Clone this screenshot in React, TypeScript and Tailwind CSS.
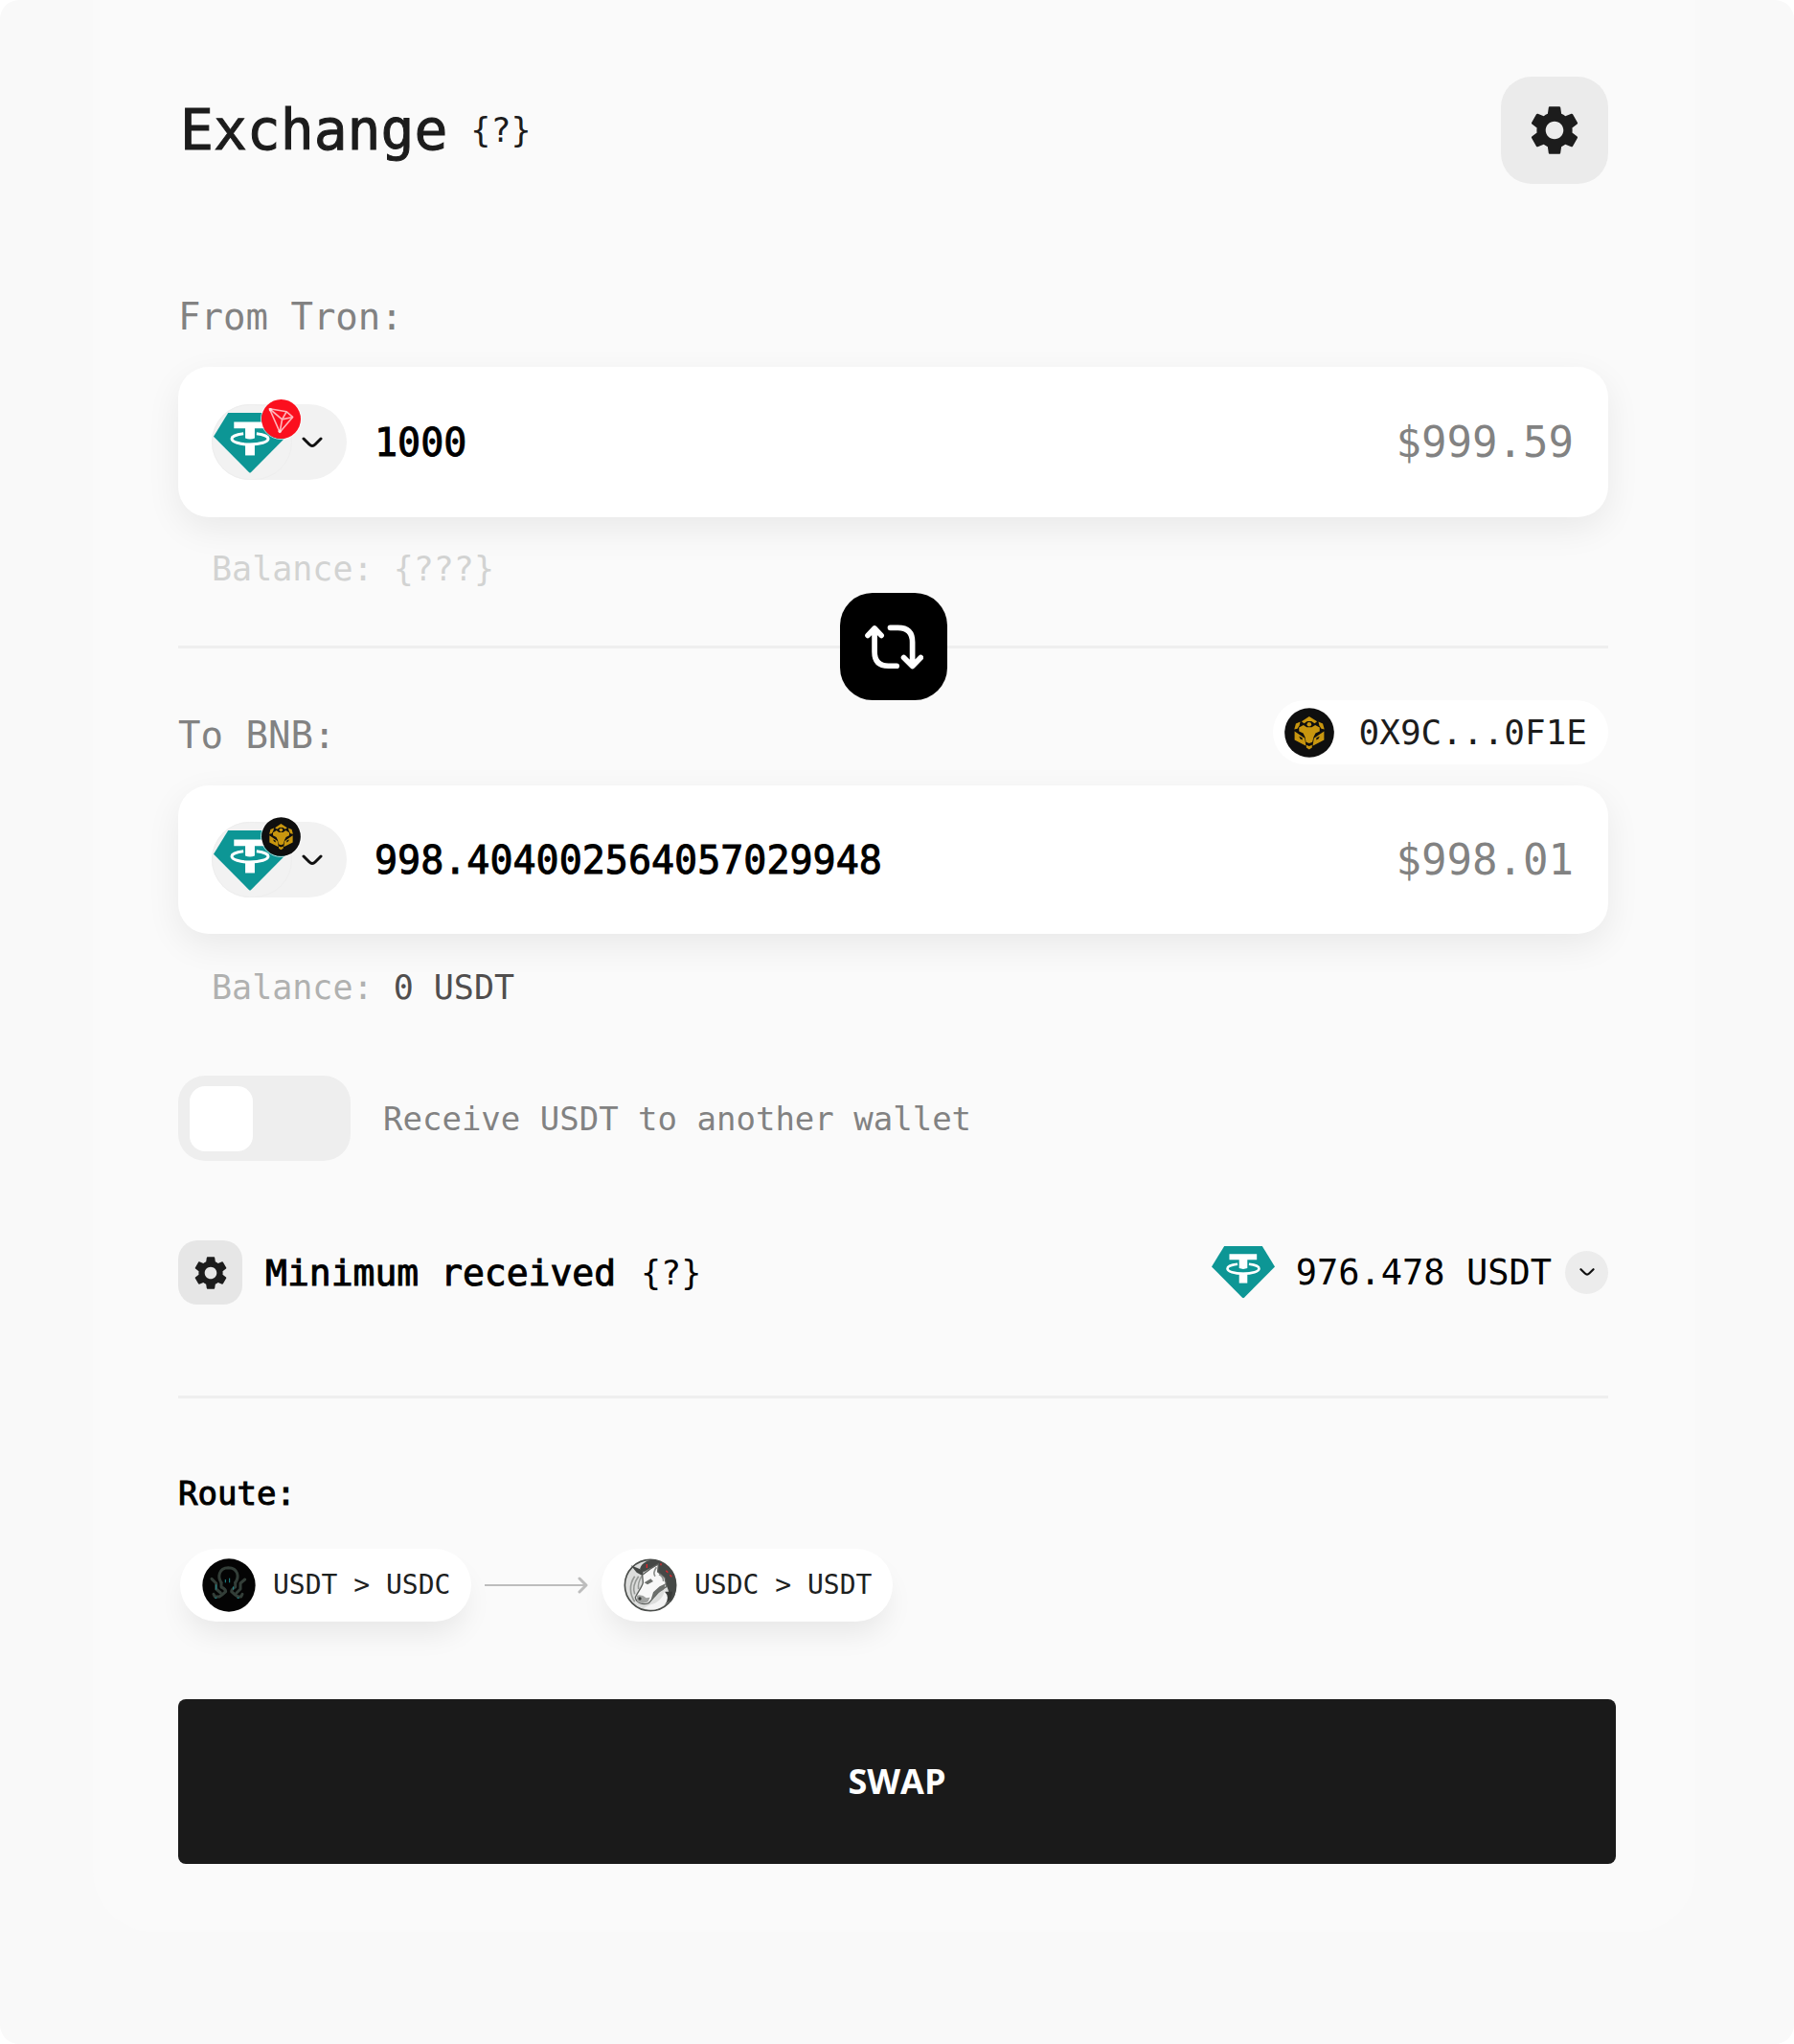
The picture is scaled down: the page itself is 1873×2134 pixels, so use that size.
import { useState } from "react";
import { MdSettings } from "react-icons/md";

function TetherLogo({ className }: { className: string }) {
  return (
    <svg viewBox="0 0 200 165" className={className} aria-hidden="true">
      <path d="M40 0H160L200 65L103 163Q100 166 97 163L0 65Z" fill="#0d9695" />
      <path d="M56 25H143V43H113V70Q100 75 87 70V43H56Z" fill="#fff" />
      <path d="M82 57C62 59 50 65 50 71C50 80 72 87 100 87S150 80 150 71C150 65 138 59 118 57" fill="none" stroke="#fff" strokeWidth="8" />
      <path d="M87 84H113V117H87Z" fill="#fff" />
    </svg>
  );
}

function TronLogo({ className }: { className: string }) {
  return (
    <svg viewBox="0 0 122 122" className={className} aria-hidden="true">
      <circle cx="61" cy="61" r="61" fill="#fb0f1e" />
      <g fill="none" stroke="#ffb3b8" strokeWidth="5" strokeLinejoin="round">
        <path d="M25 29L78 38L97 55L57 102Z" />
        <path d="M25 29L64 62L97 55M64 62L57 102M64 62L78 38" />
      </g>
      <circle cx="28" cy="32" r="5" fill="#ffd9db" />
      <circle cx="57" cy="99" r="5" fill="#ffd9db" />
    </svg>
  );
}

function TigerLogo({ className }: { className: string }) {
  return (
    <svg viewBox="0 0 157 157" className={className} aria-hidden="true">
      <circle cx="78.500" cy="78.500" r="78" fill="#0f0f0f" />
      <g fill="#c8960f">
        <path d="M54 43L78 27L103 43L95 49L85 42H72L62 49Z" />
        <circle cx="78" cy="52" r="7" />
        <path d="M31 68L36 50L50 44L47 56L41 66Z" />
        <path d="M126 68L121 50L107 44L110 56L116 66Z" />
        <path d="M46 62L60 54L70 61H86L97 54L111 62V74L98 80L92 92L88 108L78 112L68 108L65 92L59 80L46 74Z" />
        <path fillRule="evenodd" d="M32 74L64 96L68 120L32 101ZM46 90L50 98L57 101L56 94Z" />
        <path fillRule="evenodd" d="M125 74L93 96L89 120L125 101ZM111 90L107 98L100 101L101 94Z" />
        <path d="M69 117L78 121L87 117V125L78 131L69 125Z" />
      </g>
    </svg>
  );
}

function OctopusLogo({ className }: { className: string }) {
  return (
    <svg viewBox="0 0 168 168" className={className} aria-hidden="true">
      <circle cx="84" cy="84" r="83" fill="#040404" />
      <g fill="none" stroke="#333e38" strokeWidth="9" strokeLinecap="round" strokeLinejoin="round">
        <path d="M60 76C48 58 52 30 82 29C113 30 117 58 104 76" />
        <path d="M60 76V90Q74 96 74 104Q66 112 54 120H40L36 112" />
        <path d="M104 76V90Q92 96 92 104Q100 112 112 120H122L126 112" />
        <path d="M30 64L44 78V96L58 108" />
        <path d="M134 66L120 78V96L108 108" />
      </g>
      <path d="M73 66V76M86 62V76M44 82V98M98 88V98M40 124H46M110 124H116" stroke="#1d8e93" strokeWidth="3" />
    </svg>
  );
}

function HorseLogo({ className }: { className: string }) {
  return (
    <svg viewBox="0 0 166 168" className={className} aria-hidden="true">
      <circle cx="83" cy="84" r="80" fill="#dcdddc" stroke="#4a4d4a" strokeWidth="5" />
      <path d="M50 34C60 -2 112 -4 140 28C172 60 170 110 146 138C144 96 128 70 110 50L84 30L64 42Z" fill="#454846" />
      <path d="M22 22L62 38L58 54L40 44Z" fill="#454846" />
      <path d="M34 56C16 82 18 112 34 136M46 56C30 78 28 96 34 112M58 52C44 74 44 84 46 96" fill="none" stroke="#969996" strokeWidth="5" />
      <path d="M58 52L84 32L108 18L106 42L128 60L134 88L112 102L92 124L78 140C58 148 38 138 36 122C44 104 56 92 60 76Z" fill="#f8f8f8" stroke="#5d605d" strokeWidth="4" />
      <path d="M64 76L84 64L92 72L74 82ZM92 106L112 88L132 78L124 98L102 112L84 132Z" fill="#6c6f6c" />
      <path d="M40 116Q58 112 70 124L82 122L76 136Q56 146 42 136Z" fill="#a0a2a0" />
      <circle cx="50" cy="126" r="5" fill="#393b39" />
      <path d="M102 28Q90 46 98 56M110 50Q124 56 124 72" fill="none" stroke="#8d908d" strokeWidth="5" />
      <path d="M80 146C106 140 124 124 128 98C152 116 138 146 100 160Q78 162 62 156Z" fill="#f4f4f4" />
      <path d="M128 104Q146 122 128 146L148 128L152 104Z" fill="#393b39" />
      <path d="M72 18V30M116 16V22M132 38L138 44M144 52L150 58" stroke="#e5242c" strokeWidth="4" />
    </svg>
  );
}

function Chevron({ className }: { className: string }) {
  return (
    <svg viewBox="0 0 22 14" className={className} fill="none" stroke="#111" strokeWidth="3" strokeLinecap="round" strokeLinejoin="round" aria-hidden="true">
      <path d="M2 3L8 9Q11 12 14 9L20 3" />
    </svg>
  );
}

function CycleIcon() {
  return (
    <svg viewBox="0 0 185 145" className="w-[62px]" fill="none" stroke="#fff" strokeWidth="17" strokeLinecap="round" strokeLinejoin="round" aria-hidden="true">
      <path d="M12 37L33 15L54 37M33 18V88Q33 132 76 132H102" />
      <path d="M82 13H106Q151 13 151 58V130M124 106L151 133L177 106" />
    </svg>
  );
}

type AmountProps = {
  id: string;
  network: "tron" | "bnb";
  amount: string;
  value: string;
  height: string;
};

function AmountCard({ id, network, amount, value, height }: AmountProps) {
  const [text, setText] = useState(amount);
  return (
    <div className={`flex items-center rounded-[32px] bg-white pl-[35px] pr-9 shadow-[0_12px_36px_rgba(0,0,0,0.07)] ${height}`}>
      <button type="button" aria-label="Choose token" className="relative flex h-[79px] w-[141px] shrink-0 items-center rounded-full bg-[#f2f2f2]">
        <span className="flex h-[79px] w-[84px] items-center rounded-full border border-[#eeeeee] pl-px pt-0.5">
          <TetherLogo className="w-[76px]" />
        </span>
        <Chevron className="ml-2.5 w-[22px]" />
        <span className="absolute -top-1.5 left-[51px] rounded-full border border-white/70">
          {network === "tron" ? <TronLogo className="size-[41px]" /> : <TigerLogo className="size-[41px]" />}
        </span>
      </button>
      <input
        id={id}
        value={text}
        inputMode="decimal"
        onChange={(e) => setText(e.target.value)}
        className="ml-[29px] min-w-0 flex-1 bg-transparent text-[40px] leading-[48px] text-black outline-none [-webkit-text-stroke:1px]"
      />
      <span className="text-[44px] leading-[48px] text-[#828282]">{value}</span>
    </div>
  );
}

function RoutePill({ logo, from, to }: { logo: React.ReactNode; from: string; to: string }) {
  return (
    <div className="flex h-[76px] w-[304px] items-center gap-[18px] rounded-full bg-white pl-[23px] text-[28px] leading-10 text-[#1d211f] shadow-[0_18px_30px_-6px_rgba(0,0,0,0.08)]">
      {logo}
      <span className="whitespace-nowrap">{from} &gt; {to}</span>
    </div>
  );
}

export default function App() {
  const [other, setOther] = useState(false);
  return (
    <div className="min-h-screen rounded-[20px] bg-[#f9f9f9] pb-[117px] pl-[97px] pr-[103px] font-['DejaVu_Sans_Mono',monospace]">
      <main className="flex flex-col rounded-b-[64px] bg-[#fafafa] pb-[71px] pl-[89px] pr-[91px] pt-20">
        <header className="flex h-28 items-center justify-between">
          <div className="flex items-center gap-6 pl-0.5">
            <h1 className="text-[58px] leading-[64px] text-[#1c1c1c] [-webkit-text-stroke:1px]">Exchange</h1>
            <button type="button" aria-label="About exchange" className="text-[35px] leading-10 text-[#1c1c1c]">{"{?}"}</button>
          </div>
          <button type="button" aria-label="Settings" className="flex size-28 items-center justify-center rounded-[32px] bg-[#ebebeb]">
            <MdSettings className="size-[62px] text-[#1c1c1c]" />
          </button>
        </header>

        <label htmlFor="from-amount" className="mt-[115px] text-[39px] leading-[48px] text-[#828282]">From Tron:</label>
        <div className="mt-7">
          <AmountCard id="from-amount" network="tron" amount="1000" value="$999.59" height="h-[157px]" />
        </div>
        <p className="mt-[34px] pl-[35px] text-[35px] leading-10 text-[#d2d3d2]">Balance: {"{???}"}</p>

        <div className="mt-[5px] flex items-center">
          <div className="h-[3px] flex-1 bg-[#efefef]" />
          <button type="button" aria-label="Switch direction" className="flex size-28 items-center justify-center rounded-[34px] bg-black">
            <CycleIcon />
          </button>
          <div className="h-[3px] flex-1 bg-[#efefef]" />
        </div>

        <div className="flex items-end justify-between">
          <label htmlFor="to-amount" className="pb-1.5 text-[39px] leading-[48px] text-[#828282]">To BNB:</label>
          <button type="button" className="flex h-[67px] items-center gap-[26px] rounded-full bg-white pl-3 pr-[22px] text-[36px] leading-10 text-[#1c1c1c]">
            <TigerLogo className="size-[52px]" />
            0X9C...0F1E
          </button>
        </div>
        <div className="mt-[22px]">
          <AmountCard id="to-amount" network="bnb" amount="998.404002564057029948" value="$998.01" height="h-[155px]" />
        </div>
        <p className="mt-9 pl-[35px] text-[35px] leading-10 text-[#b0b1b0]">
          Balance: <span className="text-[#504e4e]">0 USDT</span>
        </p>

        <label className="mt-[72px] flex h-[89px] cursor-pointer items-center gap-[34px] text-[34px] leading-10 text-[#828282]">
          <input type="checkbox" role="switch" checked={other} onChange={(e) => setOther(e.target.checked)} className="peer sr-only" />
          <span className="flex h-[89px] w-[180px] items-center rounded-[28px] bg-[#eeeeee] px-3 peer-checked:justify-end">
            <span className="h-[68px] w-[66px] rounded-2xl bg-white" />
          </span>
          Receive USDT to another wallet
        </label>

        <section className="mt-[83px] flex h-[67px] items-center justify-between">
          <div className="flex items-center">
            <button type="button" aria-label="Slippage settings" className="flex size-[67px] items-center justify-center rounded-[20px] bg-[#e6e6e6]">
              <MdSettings className="size-[42px] text-[#1c1c1c]" />
            </button>
            <h2 className="ml-6 text-[38px] leading-[48px] text-black [-webkit-text-stroke:1px]">Minimum received</h2>
            <button type="button" aria-label="About minimum received" className="ml-[26px] text-[35px] leading-10 text-black">{"{?}"}</button>
          </div>
          <div className="flex items-center">
            <TetherLogo className="w-[66px]" />
            <span className="ml-[22px] text-[37px] leading-[48px] text-black">976.478 USDT</span>
            <button type="button" aria-label="Show details" className="ml-3.5 flex size-[45px] items-center justify-center rounded-full bg-[#ececec]">
              <Chevron className="w-4" />
            </button>
          </div>
        </section>

        <hr className="mt-[95px] h-[3px] border-0 bg-[#efefef]" />

        <h2 className="mt-[79px] text-[34px] leading-10 text-black [-webkit-text-stroke:1px]">Route:</h2>
        <div className="mt-[38px] flex items-center pl-0.5">
          <RoutePill logo={<OctopusLogo className="size-14" />} from="USDT" to="USDC" />
          <svg viewBox="0 0 108 20" className="mx-[14px] w-[108px]" fill="none" stroke="#bdbdbd" aria-hidden="true">
            <path d="M0 10H106" strokeWidth="2" />
            <path d="M99 3L106 10L99 17" strokeWidth="3" strokeLinecap="round" strokeLinejoin="round" />
          </svg>
          <RoutePill logo={<HorseLogo className="size-14" />} from="USDC" to="USDT" />
        </div>

        <button type="button" className="-mr-2 mt-[81px] h-[172px] rounded-lg bg-[#1a1a1a] font-['Open_Sans',sans-serif] text-[36px] font-bold leading-[48px] text-white">
          SWAP
        </button>
      </main>
    </div>
  );
}
